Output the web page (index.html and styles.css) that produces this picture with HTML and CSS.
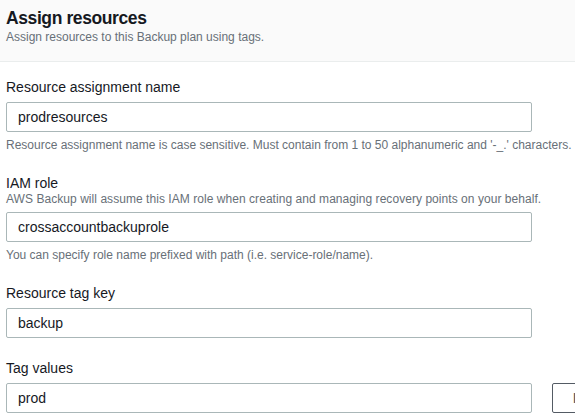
FILE: index.html
```html
<!DOCTYPE html>
<html lang="en">
<head>
    <meta charset="UTF-8">
    <meta name="viewport" content="width=device-width, initial-scale=1.0">
    <title>Assign resources</title>
    <link rel="stylesheet" href="styles.css">
</head>
<body>
    <div class="panel-header">
        <h2>Assign resources</h2>
        <p class="header-desc">Assign resources to this Backup plan using tags.</p>
    </div>

    <div class="panel-body">
        <div class="field">
            <label for="assignName">Resource assignment name</label>
            <input type="text" id="assignName" value="prodresources">
            <p class="hint">Resource assignment name is case sensitive. Must contain from 1 to 50 alphanumeric and '-_.' characters.</p>
        </div>

        <div class="field">
            <label for="iamRole">IAM role</label>
            <p class="desc">AWS Backup will assume this IAM role when creating and managing recovery points on your behalf.</p>
            <input type="text" id="iamRole" value="crossaccountbackuprole">
            <p class="hint">You can specify role name prefixed with path (i.e. service-role/name).</p>
        </div>

        <div class="field">
            <label for="tagKey">Resource tag key</label>
            <input type="text" id="tagKey" value="backup">
        </div>

        <div class="field">
            <label for="tagValues">Tag values</label>
            <div class="tag-row">
                <input type="text" id="tagValues" value="prod">
                <button class="remove-btn">Remove</button>
            </div>
        </div>
    </div>
</body>
</html>
```

FILE: styles.css
```css
* {
    margin: 0;
    padding: 0;
    box-sizing: border-box;
}

body {
    font-family: 'Liberation Sans', Arial, sans-serif;
    color: #16191f;
    background: #ffffff;
    overflow: hidden;
}

.panel-header {
    background: #fafafa;
    border-bottom: 1px solid #eaeded;
    padding: 7px 6px 0;
    height: 62px;
}

h2 {
    font-size: 17.5px;
    line-height: 22px;
    font-weight: bold;
    letter-spacing: -0.4px;
}

.header-desc {
    font-size: 12px;
    line-height: 16px;
    color: #687078;
}

.panel-body {
    padding: 15px 6px 0;
}

.field {
    margin-bottom: 20px;
}

label {
    display: block;
    font-size: 14px;
    line-height: 20px;
}

.desc {
    font-size: 12px;
    line-height: 16px;
    color: #687078;
    margin-top: -2px;
    white-space: nowrap;
    letter-spacing: 0.05px;
}

.hint {
    font-size: 12px;
    line-height: 16px;
    color: #687078;
    margin-top: 5px;
    white-space: nowrap;
}

input[type="text"] {
    display: block;
    flex: none;
    width: 526px;
    height: 30px;
    margin-top: 5px;
    padding: 0 11px;
    border: 1px solid #aab7b8;
    border-radius: 2px;
    font-family: inherit;
    font-size: 14px;
    color: #16191f;
    background: #ffffff;
}

.tag-row {
    display: flex;
    gap: 20px;
    margin-top: 5px;
}

.tag-row input[type="text"] {
    margin-top: 0;
}

.remove-btn {
    flex: none;
    height: 30px;
    padding: 0 20px;
    border: 1px solid #545b64;
    border-radius: 2px;
    background: #ffffff;
    font-family: inherit;
    font-size: 14px;
    font-weight: bold;
    color: #545b64;
}
```
